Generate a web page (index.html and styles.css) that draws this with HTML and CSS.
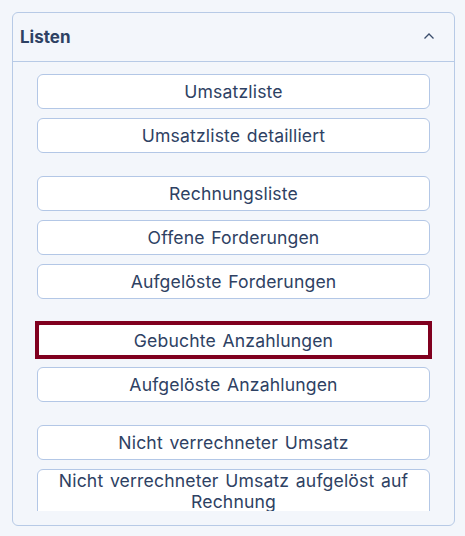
FILE: index.html
```html
<!DOCTYPE html>
<html lang="de">
<head>
<meta charset="utf-8">
<link rel="stylesheet" href="styles.css">
</head>
<body>
<div class="card">
  <div class="card-header">
    <span class="title">Listen</span>
    <svg class="chev" width="12" height="8" viewBox="0 0 12 8"><path d="M1.5 6.5 L6 2 L10.5 6.5" fill="none" stroke="#3a4d6b" stroke-width="1.3"/></svg>
  </div>
  <div class="card-body">
    <div class="scroll">
      <div class="group">
        <button class="btn">Umsatzliste</button>
        <button class="btn">Umsatzliste detailliert</button>
      </div>
      <div class="group">
        <button class="btn">Rechnungsliste</button>
        <button class="btn">Offene Forderungen</button>
        <button class="btn">Aufgelöste Forderungen</button>
      </div>
      <div class="group">
        <button class="btn active">Gebuchte Anzahlungen</button>
        <button class="btn">Aufgelöste Anzahlungen</button>
      </div>
      <div class="group">
        <button class="btn">Nicht verrechneter Umsatz</button>
        <button class="btn tall">Nicht verrechneter Umsatz aufgelöst auf Rechnung</button>
      </div>
    </div>
  </div>
</div>
</body>
</html>
```
FILE: styles.css
```css
html, body {
  margin: 0;
  padding: 0;
  background: #f3f6fb;
}
body {
  padding: 12px 10px 10px 12px;
  font-family: "Inter", "Noto Sans", sans-serif;
  color: #2e4163;
}
.card {
  border: 1px solid #b7cae6;
  border-radius: 6px;
  background: #f3f6fb;
  height: 514px;
  box-sizing: border-box;
  display: flex;
  flex-direction: column;
}
.card-header {
  height: 48px;
  border-bottom: 1px solid #b7cae6;
  display: flex;
  align-items: center;
  justify-content: space-between;
  padding: 0 19px 0 7px;
  flex: none;
}
.title {
  font-weight: 700;
  font-size: 17px;
  color: #2e4163;
}
.chev { display: block; margin-top: -2px; }
.card-body {
  flex: 1;
  padding: 0 0 14px 0;
  min-height: 0;
  display: flex;
}
.scroll {
  flex: 1;
  overflow: hidden;
  padding: 12px 24px 0 24px;
  display: flex;
  flex-direction: column;
  gap: 23.4px;
}
.group {
  display: flex;
  flex-direction: column;
  gap: 9px;
}
.btn {
  position: relative;
  font-family: inherit;
  font-size: 17.6px;
  letter-spacing: 0.15px;
  word-spacing: 1.5px;
  color: #2e4163;
  background: #fff;
  border: 1px solid #b3c7e6;
  border-radius: 6px;
  height: 35px;
  padding: 0 8px;
  line-height: 21px;
  text-align: center;
  flex: none;
}
.btn.tall {
  height: auto;
  padding: 0 8px 8px;
}
.btn.active::after {
  content: "";
  position: absolute;
  inset: -3px -3px -2px -3px;
  border: 4px solid #80001f;
}
```
